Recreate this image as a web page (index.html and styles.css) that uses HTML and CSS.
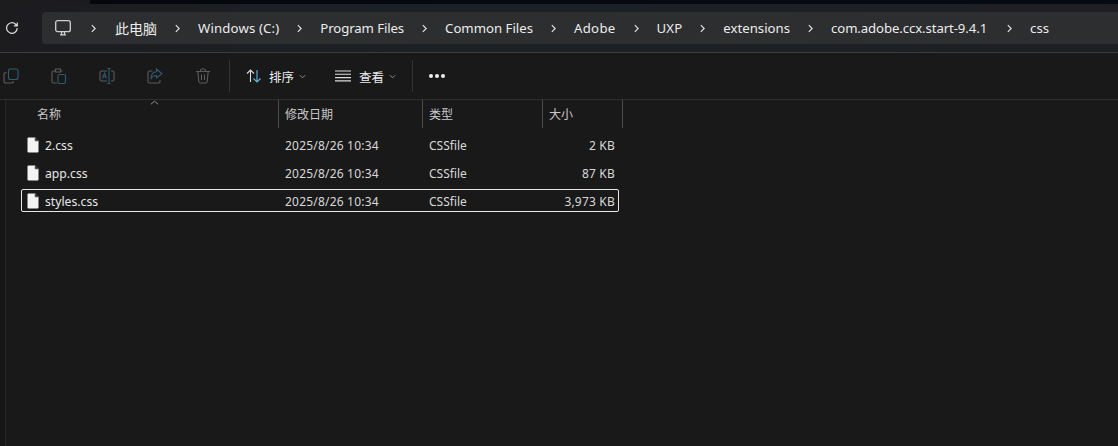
FILE: index.html
```html
<!DOCTYPE html>
<html lang="zh-CN">
<head>
<meta charset="utf-8">
<title>css - 文件资源管理器</title>
<link rel="stylesheet" href="styles.css">
</head>
<body>
<div class="strip"></div>
<header class="addressbar">
  <svg class="refresh" viewBox="0 0 14 14"><path d="M12.200 7A5.300 5.300 0 1 1 10.600 3.200L12.200 4.800M12.300 1.400V4.900H8.900"/></svg>
  <nav class="crumbs">
    <svg class="pc" viewBox="0 0 16 16"><rect x="0.700" y="0.700" width="14.600" height="11" rx="2"/><path d="M5 14.800H11M6.500 11.700V14.500M9.500 11.700V14.500"/></svg>
    <svg class="chev first" viewBox="0 0 6 10"><path d="M1 1L5 5L1 9"/></svg><span class="cjk">此电脑</span>
    <svg class="chev" viewBox="0 0 6 10"><path d="M1 1L5 5L1 9"/></svg><span class="wide">Windows (C:)</span>
    <svg class="chev" viewBox="0 0 6 10"><path d="M1 1L5 5L1 9"/></svg><span class="narrow">Program Files</span>
    <svg class="chev" viewBox="0 0 6 10"><path d="M1 1L5 5L1 9"/></svg><span>Common Files</span>
    <svg class="chev" viewBox="0 0 6 10"><path d="M1 1L5 5L1 9"/></svg><span class="wider">Adobe</span>
    <svg class="chev" viewBox="0 0 6 10"><path d="M1 1L5 5L1 9"/></svg><span class="wide">UXP</span>
    <svg class="chev" viewBox="0 0 6 10"><path d="M1 1L5 5L1 9"/></svg><span>extensions</span>
    <svg class="chev" viewBox="0 0 6 10"><path d="M1 1L5 5L1 9"/></svg><span class="narrow">com.adobe.ccx.start-9.4.1</span>
    <svg class="chev last" viewBox="0 0 6 10"><path d="M1 1L5 5L1 9"/></svg><span>css</span>
  </nav>
</header>
<div class="toolbar">
  <div class="tools">
    <svg class="tool" viewBox="0 0 16 16"><rect class="blue" x="5.500" y="1" width="9.500" height="10.500" rx="2"/><path d="M3.500 4.500H3A2 2 0 0 0 1 6.500V13A2 2 0 0 0 3 15H8.500A2 2 0 0 0 10.500 13.500"/></svg>
    <svg class="tool" viewBox="0 0 16 16"><path d="M4 3H2.500A1.500 1.500 0 0 0 1 4.500V13.500A1.500 1.500 0 0 0 2.500 15H6M11.500 3H10M4.500 1H9.500V4H4.500Z"/><rect class="blue" x="7" y="6.500" width="7.500" height="9" rx="1.500"/></svg>
    <svg class="tool" viewBox="0 0 16 16"><path d="M8 3H2.500A1.500 1.500 0 0 0 1 4.500V11.500A1.500 1.500 0 0 0 2.500 13H8M12 3H13.500A1.500 1.500 0 0 1 15 4.500V11.500A1.500 1.500 0 0 1 13.500 13H12"/><path class="blue" d="M8.500 0.500H11.500M8.500 15.500H11.500M10 0.500V15.500M3.500 10.500L5.500 5L7.500 10.500M4.200 8.800H6.800"/></svg>
    <svg class="tool" viewBox="0 0 16 16"><path d="M5.500 3H2.500A1.500 1.500 0 0 0 1 4.500V13.500A1.500 1.500 0 0 0 2.500 15H11.500A1.500 1.500 0 0 0 13 13.500V12"/><path class="blue" d="M9.500 1L15 5.800L9.500 10V7.500C7 7.500 5 8.500 4 11C4 7 6 4 9.500 3.800Z"/></svg>
    <svg class="tool" viewBox="0 0 16 16"><path d="M1 3.500H15M5.500 3.500V2.500A1.500 1.500 0 0 1 7 1H9A1.500 1.500 0 0 1 10.500 2.500V3.500M2.800 3.500L3.800 13.500A1.700 1.700 0 0 0 5.500 15H10.500A1.700 1.700 0 0 0 12.200 13.500L13.200 3.500M6.500 6.500V12M9.500 6.500V12"/></svg>
  </div>
  <div class="divider"></div>
  <div class="action sort">
    <svg class="action-icon" viewBox="0 0 16 16"><path d="M4.500 14V2M1 5.500L4.500 2L8 5.500"/><path class="sky" d="M11 2V14M7.500 10.500L11 14L14.500 10.500"/></svg>
    <span>排序</span>
    <svg class="caret" viewBox="0 0 8 5"><path d="M1 1L4 4L7 1"/></svg>
  </div>
  <div class="action view">
    <svg class="action-icon" viewBox="0 0 16 16"><path d="M0 3H16M0 6.300H16M0 9.600H16M0 12.900H16"/></svg>
    <span>查看</span>
    <svg class="caret" viewBox="0 0 8 5"><path d="M1 1L4 4L7 1"/></svg>
  </div>
  <div class="divider second"></div>
  <div class="more"><i></i><i></i><i></i></div>
</div>
<main class="list">
  <div class="head">
    <div class="col name">名称<svg class="sortmark" viewBox="0 0 10 5"><path d="M1 4.500L5 1L9 4.500"/></svg></div>
    <div class="col">修改日期</div>
    <div class="col">类型</div>
    <div class="col">大小</div>
  </div>
  <div class="row">
    <div class="fname"><svg class="file" viewBox="0 0 12 16"><path d="M0.500 1.500A1 1 0 0 1 1.500 0.500H8L11.500 4V14.500A1 1 0 0 1 10.500 15.500H1.500A1 1 0 0 1 0.500 14.500Z"/><path class="fold" d="M8 0.500V4H11.500"/></svg>2.css</div>
    <div class="date">2025/8/26 10:34</div><div class="type">CSSfile</div><div class="size">2 KB</div>
  </div>
  <div class="row">
    <div class="fname"><svg class="file" viewBox="0 0 12 16"><path d="M0.500 1.500A1 1 0 0 1 1.500 0.500H8L11.500 4V14.500A1 1 0 0 1 10.500 15.500H1.500A1 1 0 0 1 0.500 14.500Z"/><path class="fold" d="M8 0.500V4H11.500"/></svg>app.css</div>
    <div class="date">2025/8/26 10:34</div><div class="type">CSSfile</div><div class="size">87 KB</div>
  </div>
  <div class="row selected">
    <div class="fname"><svg class="file" viewBox="0 0 12 16"><path d="M0.500 1.500A1 1 0 0 1 1.500 0.500H8L11.500 4V14.500A1 1 0 0 1 10.500 15.500H1.500A1 1 0 0 1 0.500 14.500Z"/><path class="fold" d="M8 0.500V4H11.500"/></svg>styles.css</div>
    <div class="date">2025/8/26 10:34</div><div class="type">CSSfile</div><div class="size">3,973 KB</div>
  </div>
</main>
</body>
</html>
```
FILE: styles.css
```css
* { box-sizing: border-box; }
html, body { height: 100%; }
body {
  margin: 0;
  background: #161616;
  color: #e4e4e4;
  font-family: "Noto Sans", "Noto Sans CJK SC", sans-serif;
  overflow: hidden;
  display: flex;
  flex-direction: column;
}
.strip {
  height: 4px;
  background: linear-gradient(90deg, #1c1c1f 0, #1c1c1f 89px, #05070d 91px, #060a12 100%);
}
svg { fill: none; stroke: currentColor; display: block; flex: none; }

.addressbar {
  height: 49px;
  background: linear-gradient(90deg, #1c1c1f 0, #1c2126 40%, #1d1f22 100%);
  border-bottom: 1px solid #3c3c3c;
  display: flex;
  align-items: flex-start;
  padding: 8px 0 0 5px;
}
.refresh { width: 14px; height: 14px; margin: 9px 23px 0 0; color: #dcdcdc; stroke-width: 1.2; }
.crumbs {
  flex: 1;
  height: 32px;
  background: #2c2e30;
  border-radius: 4px 0 0 4px;
  display: flex;
  align-items: center;
  padding-left: 13px;
  font-size: 13.2px;
  color: #ececec;
  white-space: nowrap;
}
.cjk { font-size: 14px; }
.wide { letter-spacing: 0.15px; }
.wider { letter-spacing: 0.3px; }
.narrow { letter-spacing: -0.1px; }
.pc { width: 16px; height: 16px; color: #d0d0d0; stroke-width: 1.3; }
.chev { width: 5px; height: 9px; margin: 0 18px; color: #e2e2e2; stroke-width: 1.4; }
.chev.first { margin-left: 20px; margin-right: 19px; }
.chev.last { margin: 0 18px 0 20px; }

.toolbar {
  height: 47px;
  background: #191919;
  border-bottom: 1px solid #2e2e2e;
  display: flex;
  align-items: center;
  padding-left: 3px;
}
.tools { display: flex; gap: 32px; width: 208px; }
.tool { width: 16px; height: 16px; color: #5c5c5c; stroke-width: 1.1; }
.blue { stroke: #2f5a72; }
.divider { width: 1px; height: 32px; background: #333; margin-left: 18px; }
.action { display: flex; align-items: center; font-size: 12.500px; color: #ececec; }
.action-icon { width: 16px; height: 16px; stroke-width: 1.1; color: #dcdcdc; margin-right: 7px; }
.view .action-icon { margin-right: 8px; }
.sky { stroke: #62b6e6; }
.caret { width: 7px; height: 5px; color: #9c9c9c; margin-left: 5px; stroke-width: 1; }
.sort { margin-left: 16px; }
.view { margin-left: 29px; }
.divider.second { margin-left: 16px; }
.more { display: flex; gap: 2px; margin-left: 16px; }
.more i { width: 4px; height: 4px; border-radius: 50%; background: #efefef; }

.list { flex: 1; background: #191919; font-size: 12px; color: #d8d8d8; margin-left: 5px; border-left: 1px solid #272727; }
.head { display: grid; grid-template-columns: 258px 144px 120px 80px; margin: 0 0 1px 15px; height: 28px; color: #c8c8c8; }
.col { border-right: 1px solid #4c4c4c; padding: 5px 0 0 6px; position: relative; height: 28px; }
.col.name { padding-left: 16px; }
.sortmark { position: absolute; left: 129px; top: 0; width: 9px; height: 5px; color: #a0a0a0; stroke-width: 1; }
.row {
  display: grid;
  grid-template-columns: 257px 144px 120px 1fr;
  width: 598px;
  height: 23px;
  margin: 5px 0 0 15px;
  padding-top: 1px;
  align-items: center;
  border: 1px solid transparent;
  border-radius: 2px;
}
.selected { border-color: #e6e6e6; }
.fname { display: flex; align-items: center; gap: 6px; padding-left: 5px; font-size: 12.200px; color: #e8e8e8; }
.file { width: 12px; height: 16px; fill: #f4f4f4; stroke: none; }
.fold { stroke: #8a8a8a; stroke-width: 0.8; fill: #191919; }
.date { padding-left: 6px; letter-spacing: 0.2px; }
.type { padding-left: 6px; }
.size { text-align: right; padding-right: 3px; letter-spacing: 0.2px; }
```
